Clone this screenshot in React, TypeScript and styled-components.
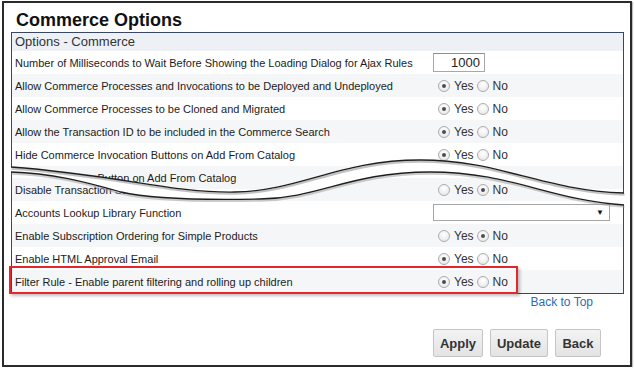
import * as React from 'react';
import styled, { createGlobalStyle } from 'styled-components';

const GlobalStyle = createGlobalStyle`
  body {
    margin: 0;
    background: #fff;
    font-family: "Liberation Sans", Arial, sans-serif;
  }
`;

type Opt = {
  label: string;
  kind: 'yesno' | 'number' | 'select' | 'none';
  value?: string;
  yes?: boolean;
};

const topRows: Opt[] = [
  { label: 'Number of Milliseconds to Wait Before Showing the Loading Dialog for Ajax Rules', kind: 'number', value: '1000' },
  { label: 'Allow Commerce Processes and Invocations to be Deployed and Undeployed', kind: 'yesno', yes: true },
  { label: 'Allow Commerce Processes to be Cloned and Migrated', kind: 'yesno', yes: true },
  { label: 'Allow the Transaction ID to be included in the Commerce Search', kind: 'yesno', yes: true },
  { label: 'Hide Commerce Invocation Buttons on Add From Catalog', kind: 'yesno', yes: true },
  // only a sliver of this row shows above the tear
  { label: 'Hide Commerce Button on Add From Catalog', kind: 'none' },
];

const bottomRows: Opt[] = [
  { label: 'Disable Transaction Status Updates', kind: 'yesno', yes: false },
  { label: 'Accounts Lookup Library Function', kind: 'select' },
  { label: 'Enable Subscription Ordering for Simple Products', kind: 'yesno', yes: false },
  { label: 'Enable HTML Approval Email', kind: 'yesno', yes: true },
  { label: 'Filter Rule - Enable parent filtering and rolling up children', kind: 'yesno', yes: true },
];

const buttons = [
  { text: 'Apply', w: 50 },
  { text: 'Update', w: 58 },
  { text: 'Back', w: 46 },
];

// torn edge curves, in panel coordinates
const upperCurve = 'M0,135 C109,143 159,161 224,160 C289,159 329,128 409,128 C489,128 529,158 613,161';
const lowerCurve = 'M0,140 C40,141 75,150 110,160 C140,167 200,168 249,167 C309,166 339,140 419,140 C499,140 539,168 613,173';

const Choice = ({ yes }: { yes?: boolean }) => (
  <ChoiceWrap>
    <Radio $on={yes} />
    <ChoiceText>Yes</ChoiceText>
    <Radio $on={!yes} $second />
    <ChoiceText>No</ChoiceText>
  </ChoiceWrap>
);

const OptionRow = ({ opt, shade, marked }: { opt: Opt; shade: boolean; marked?: boolean }) => (
  <Row $shade={shade}>
    <Label>{opt.label}</Label>
    <Value>
      {opt.kind === 'yesno' && <Choice yes={opt.yes} />}
      {opt.kind === 'number' && <NumberBox readOnly value={opt.value} />}
      {opt.kind === 'select' && (
        <SelectBox>
          <Arrow>▼</Arrow>
        </SelectBox>
      )}
    </Value>
    {marked && <Highlight />}
  </Row>
);

const App = () => {
  return (
    <>
      <GlobalStyle />
      <Frame>
        <Title>Commerce Options</Title>
        <Panel>
          <TopPiece>
            <Header>Options - Commerce</Header>
            {topRows.map((r, i) => (
              <OptionRow key={r.label} opt={r} shade={i % 2 === 1} />
            ))}
          </TopPiece>
          <BottomPiece>
            {bottomRows.map((r, i) => (
              <OptionRow
                key={r.label}
                opt={r}
                shade={i % 2 === 0}
                marked={i === bottomRows.length - 1}
              />
            ))}
          </BottomPiece>
          <Tear width="616" height="190" viewBox="0 0 616 190">
            <path d={upperCurve} transform="translate(0.5,1.6)" fill="none" stroke="#9a9a9a" strokeWidth="2.2" opacity="0.6" />
            <path d={lowerCurve} transform="translate(0.5,1.6)" fill="none" stroke="#9a9a9a" strokeWidth="2.2" opacity="0.5" />
            <path d={upperCurve} fill="none" stroke="#1e1e1e" strokeWidth="1.3" />
            <path d={lowerCurve} fill="none" stroke="#1e1e1e" strokeWidth="1.3" />
          </Tear>
        </Panel>
        <TopLink>
          <a href="#top">Back to Top</a>
        </TopLink>
        <Buttons>
          {buttons.map((b) => (
            <Btn key={b.text} $w={b.w}>
              {b.text}
            </Btn>
          ))}
        </Buttons>
      </Frame>
    </>
  );
};

const Frame = styled.div`
  box-sizing: border-box;
  width: 630px;
  height: 366px;
  margin: 1px 0 0 2px;
  border: 2px solid #2a2a2a;
  box-shadow: 1px 1px 1px rgba(0, 0, 0, 0.25);
  background: #fff;
`;

const Title = styled.h1`
  margin: 6px 0 0 12px;
  font-size: 18px;
  line-height: 22px;
  font-weight: bold;
  color: #111;
`;

const Panel = styled.div`
  position: relative;
  width: 613px;
  margin: 1px 0 0 7px;
`;

const TopPiece = styled.div`
  position: relative;
  border: 1px solid #3a4763;
  border-bottom: none;
  padding-bottom: 6px;
  background: #fff;
  clip-path: path('M-10,0 L620,0 L620,161 L613,161 C529,158 489,128 409,128 C329,128 289,159 224,160 C159,161 109,143 0,135 L-10,135 Z');
`;

const BottomPiece = styled.div`
  position: relative;
  margin-top: -29px;
  padding-top: 12px;
  border: 1px solid #3a4763;
  border-top: none;
  background: #fff;
  clip-path: path('M-10,6 L0,6 C40,7 75,16 110,26 C140,33 200,34 249,33 C309,32 339,6 419,6 C499,6 539,34 613,39 L620,39 L620,400 L-10,400 Z');
`;

const Tear = styled.svg`
  position: absolute;
  left: 0;
  top: 0;
  overflow: visible;
  pointer-events: none;
`;

const Header = styled.div`
  height: 18px;
  line-height: 18px;
  padding-left: 3px;
  background: #edf0f5;
  font-size: 13px;
  color: #333;
`;

const Row = styled.div<{ $shade: boolean }>`
  position: relative;
  display: grid;
  grid-template-columns: 421px 1fr;
  align-items: center;
  height: 23px;
  background: ${(p) => (p.$shade ? '#f5f6f7' : '#fff')};
`;

const Label = styled.div`
  padding-left: 3px;
  font-size: 11px;
  color: #1c1c1c;
  white-space: nowrap;
`;

const Value = styled.div`
  display: flex;
  align-items: center;
`;

const ChoiceWrap = styled.div`
  display: flex;
  align-items: center;
  padding-left: 5px;
`;

const Radio = styled.span<{ $on?: boolean; $second?: boolean }>`
  position: relative;
  box-sizing: border-box;
  width: 12px;
  height: 12px;
  margin-left: ${(p) => (p.$second ? '3px' : '0')};
  border-radius: 50%;
  border: 1px solid #acacac;
  background: radial-gradient(circle at 50% 35%, #ffffff 0%, #e4e4e4 100%);

  &::after {
    content: '';
    display: ${(p) => (p.$on ? 'block' : 'none')};
    position: absolute;
    left: 3px;
    top: 3px;
    width: 4px;
    height: 4px;
    border-radius: 50%;
    background: #4d4d4d;
  }
`;

const ChoiceText = styled.span`
  margin-left: 4px;
  font-size: 12px;
  color: #333;
`;

const NumberBox = styled.input`
  box-sizing: border-box;
  width: 52px;
  height: 19px;
  padding: 0 4px 0 0;
  border: 1px solid #a8a8a8;
  border-top-color: #8e8e8e;
  text-align: right;
  font: 13px "Liberation Sans", Arial, sans-serif;
  color: #222;
  background: #fff;
  outline: none;
`;

const SelectBox = styled.div`
  box-sizing: border-box;
  display: flex;
  justify-content: flex-end;
  align-items: center;
  width: 177px;
  height: 17px;
  padding-right: 5px;
  border: 1px solid #a6a6a6;
  background: #fff;
`;

const Arrow = styled.span`
  font-size: 8px;
  color: #111;
`;

const Highlight = styled.div`
  position: absolute;
  left: -3px;
  top: -4px;
  width: 509px;
  height: 28px;
  box-sizing: border-box;
  border: 2px solid #e6262d;
  box-shadow: 2px 2px 3px rgba(0, 0, 0, 0.25);
  pointer-events: none;
`;

const TopLink = styled.div`
  margin: 1px 37px 0 0;
  text-align: right;
  font-size: 12px;
  line-height: 14px;

  a {
    color: #2b6db5;
    text-decoration: none;
  }
`;

const Buttons = styled.div`
  display: flex;
  justify-content: flex-end;
  gap: 7px;
  margin: 20px 29px 0 0;
`;

const Btn = styled.button<{ $w: number }>`
  box-sizing: border-box;
  width: ${(p) => p.$w}px;
  height: 28px;
  padding: 0;
  border: 1px solid #c5c5c5;
  border-radius: 2px;
  background: linear-gradient(#f3f3f3, #e3e3e3);
  font: bold 13px "Liberation Sans", Arial, sans-serif;
  color: #333;
`;

export default App;
